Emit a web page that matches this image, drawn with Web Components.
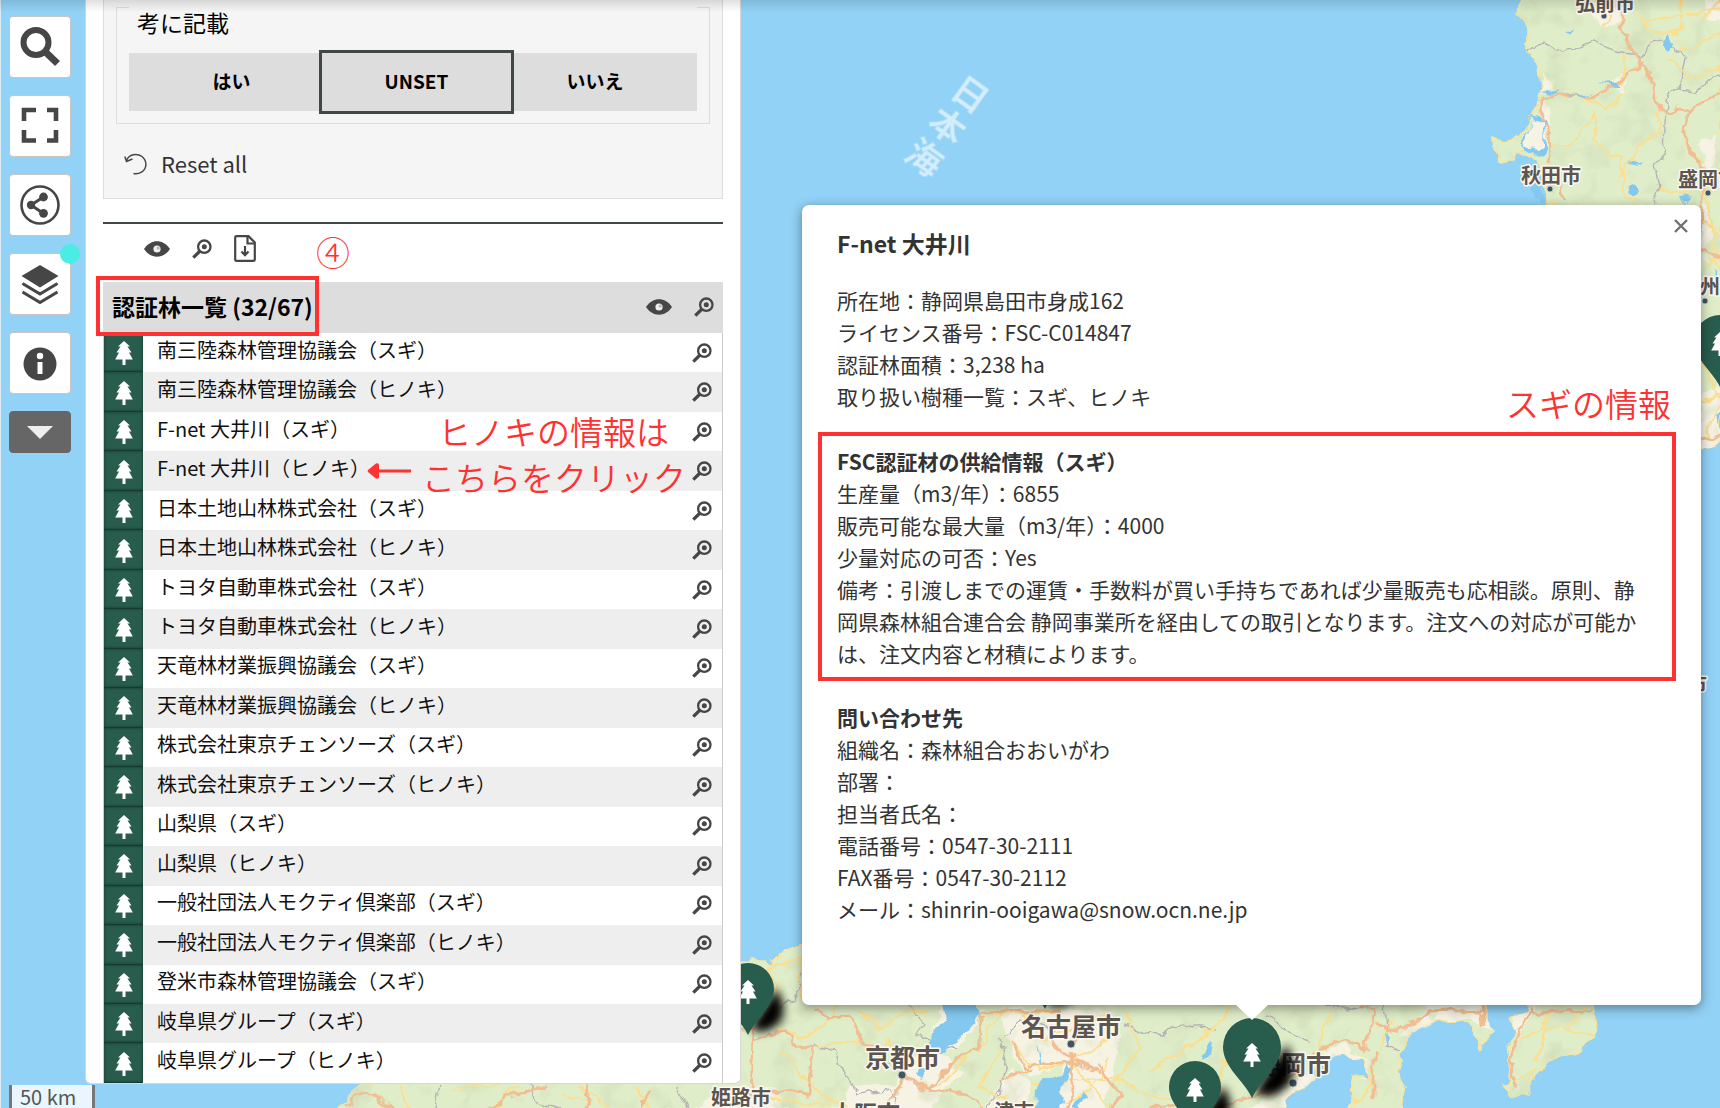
<!DOCTYPE html>
<html lang="ja">
<head>
<meta charset="utf-8">
<meta name="viewport" content="width=device-width, initial-scale=1">
<title>認証林マップ</title>
<style>
html, body { height: 100%; margin: 0; }
body { overflow: hidden; font-family: "Noto Sans CJK JP", "Noto Sans", sans-serif; color: #000; background: #92d2f6; }
</style>
</head>
<body>
<forest-app></forest-app>

<script>
const ICONS = {
  search: ['0 0 40 40', '<circle cx="16" cy="15.500" r="12.500" fill="none" stroke="#464646" stroke-width="6"/><path d="M25.500 25 37.500 36.500" stroke="#464646" stroke-width="7"/>'],
  full: ['0 0 40 40', '<path d="M4 15V4H16M27 4H36V15M36 24V34.500H27M16 34.500H4V24" fill="none" stroke="#464646" stroke-width="4.600"/>'],
  share: ['0 0 40 40', '<circle cx="20" cy="20" r="18.500" fill="none" stroke="#464646" stroke-width="2.600"/><path d="M23.500 12 11 20 23.500 28.500" fill="none" stroke="#464646" stroke-width="3"/><circle cx="23.500" cy="12" r="4.400" fill="#464646"/><circle cx="11" cy="20" r="4.200" fill="#464646"/><circle cx="23.500" cy="28.300" r="4.400" fill="#464646"/>'],
  layers: ['0 0 40 40', '<path d="M20 1 38.500 12 20 23.500 1.500 12Z" fill="#464646"/><path d="M2.500 19.500 20 30 37.500 19.500M2.500 28 20 38.500 37.500 28" fill="none" stroke="#464646" stroke-width="3.200"/>'],
  info: ['0 0 40 40', '<circle cx="20" cy="21" r="16.500" fill="#464646"/><circle cx="20" cy="13" r="3.200" fill="#fff"/><path d="M17.500 19H22.500V31H17.500Z" fill="#fff"/>'],
  down: ['0 0 40 20', '<path d="M7 4H33L20 17Z" fill="#eee"/>'],
  eye: ['0 0 26 16', '<path d="M0 8C7-2.300 19-2.300 26 8 19 18.300 7 18.300 0 8Z" fill="#464646"/><circle cx="13" cy="8" r="3.600" fill="#eee"/><circle cx="14.200" cy="7" r="1.500" fill="#464646" opacity=".35"/>'],
  zoom: ['0 0 20 20', '<circle cx="12.300" cy="7.700" r="6.200" fill="none" stroke="#464646" stroke-width="2.300"/><circle cx="12.300" cy="7.700" r="2.500" fill="#464646"/><path d="M8 12 1.300 18.700" stroke="#464646" stroke-width="3.200"/>'],
  file: ['0 0 22 27', '<path d="M1.200 2.500Q1.200 1.200 2.500 1.200H14.500L20.800 7.500V24.500Q20.800 25.800 19.500 25.800H2.500Q1.200 25.800 1.200 24.500Z" fill="none" stroke="#464646" stroke-width="2.200"/><path d="M13.500 1.500V8.500H20.500M11 11V20M7.500 16.500 11 20.200 14.500 16.500" fill="none" stroke="#464646" stroke-width="2.200"/>'],
  reset: ['0 0 24 22', '<path d="M2.500 7.500C5 1 13 0 18 3.500 23.500 8 23 16 17.500 19.200Q13.500 21.500 9.500 20.500M0.800 3.500 2.500 8.500 8.500 6" fill="none" stroke="#464646" stroke-width="1.500"/>'],
  tree: ['0 0 18 24', '<path d="M9 0 15 5.500H12.500L16.500 11.500H14L17.800 18.500H10.500V24H7.500V18.500H.2L4 11.500H1.500L5.500 5.500H3Z" fill="#fff"/>'],
  close: ['0 0 14 14', '<path d="M1 1 13 13M13 1 1 13" stroke="#707070" stroke-width="2.400"/>'],
  arrow: ['0 0 44 16', '<path d="M10 8H44" stroke="#ff3131" stroke-width="3"/><path d="M1 7Q0 8 1 9L9 15.500Q12 16.500 12 13.500V2.500Q12-.5 9 .5Z" fill="#ff3131"/>']
};

function define(name, html, setup) {
  const tpl = document.createElement('template');
  tpl.innerHTML = html;
  customElements.define(name, class extends HTMLElement {
    constructor() {
      super();
      this.attachShadow({ mode: 'open' }).append(tpl.content.cloneNode(true));
    }
    connectedCallback() { if (setup) setup.call(this, this.shadowRoot); }
  });
}

define('ui-icon', `<style>:host{display:inline-flex}svg{display:block;width:var(--w,20px);height:var(--h,20px);overflow:visible}</style><svg aria-hidden="true"></svg>`,
  function (root) {
    const [box, shapes] = ICONS[this.getAttribute('name')];
    const svg = root.querySelector('svg');
    svg.setAttribute('viewBox', box);
    svg.innerHTML = shapes;
  });

define('tool-button', `<style>
:host{display:block;position:relative;--w:40px;--h:40px}
button{display:flex;align-items:center;justify-content:center;width:62px;height:62px;padding:0;border:1px solid #c9c5c2;border-radius:4px;background:#fff;cursor:pointer}
:host([dark]) button{height:42px;background:#666;border-color:#666;--h:20px}
:host([badge])::after{content:"";position:absolute;right:-9px;top:-9px;width:20px;height:20px;border-radius:50%;background:#4bece3}
</style><button type="button"><slot></slot></button>`,
  function (root) { root.querySelector('button').setAttribute('aria-label', this.getAttribute('label')); });

define('tool-bar', `<style>
:host{display:flex;flex-direction:column;align-items:flex-start;gap:17px;padding:16px 0 0 9px}
</style>
<tool-button label="検索"><ui-icon name="search"></ui-icon></tool-button>
<tool-button label="全画面"><ui-icon name="full"></ui-icon></tool-button>
<tool-button label="共有"><ui-icon name="share"></ui-icon></tool-button>
<tool-button label="レイヤー" badge><ui-icon name="layers"></ui-icon></tool-button>
<tool-button label="情報"><ui-icon name="info"></ui-icon></tool-button>
<tool-button label="閉じる" dark><ui-icon name="down"></ui-icon></tool-button>`);

define('filter-box', `<style>
:host{display:block;margin-top:-40px;padding:16px 12px 14px;border:1px solid #ddd;background:#f5f5f5}
fieldset{margin:0;padding:0 12px 12px;border:1px solid #ddd;min-width:0}
legend{box-sizing:border-box;width:100%;padding:30px 8px 0;font-size:23px;line-height:30px}
.opts{display:grid;grid-template-columns:193fr 189fr 186fr;margin-top:16px}
label{display:flex;align-items:center;justify-content:center;height:58px;background:#ddd;font-size:19px;font-weight:700;padding-bottom:4px;box-sizing:border-box;cursor:pointer}
label:first-child{padding-left:12px}
label:last-child{padding-right:18px}
input{position:absolute;opacity:0;pointer-events:none}
label:has(:checked){outline:3px solid #404845;z-index:1}
.reset{display:flex;align-items:center;gap:13px;height:40px;margin-top:20px;padding:0 8px;border:0;background:none;font:inherit;font-size:22px;line-height:32px;color:#333;--w:24px;--h:22px;cursor:pointer}
.reset span{padding-bottom:2px}
</style>
<fieldset><legend>考に記載</legend>
<div class="opts">
<label><input type="radio" name="note">はい</label>
<label><input type="radio" name="note" checked>UNSET</label>
<label><input type="radio" name="note">いいえ</label>
</div></fieldset>
<button class="reset" type="button"><ui-icon name="reset"></ui-icon><span>Reset all</span></button>`);

define('forest-row', `<style>
:host{flex:1 1 0;min-height:0;display:flex;align-items:center;background:var(--row,#fff);border:solid #ccc;border-width:0 1px}
.mark{box-sizing:border-box;align-self:stretch;width:39px;padding-top:2px;display:flex;align-items:center;justify-content:center;background:#285c4c;box-shadow:inset 0 0 3px #143a2e;border-bottom:1px solid #163a2f;--w:18px;--h:24px}
a{flex:1;padding:0 0 6px 14px;font-size:20px;line-height:30px;color:#111;text-decoration:none;white-space:nowrap}
button{display:flex;padding:0;margin-right:10px;border:0;background:none;cursor:pointer}
</style><span class="mark"><ui-icon name="tree"></ui-icon></span><a href="#"><slot></slot></a><button type="button" aria-label="拡大"><ui-icon name="zoom"></ui-icon></button>`);

define('forest-list', `<style>
:host{flex:1;min-height:0;display:flex;flex-direction:column}
.tools{display:flex;align-items:center;gap:22px;height:58px;padding:0 0 9px 41px;box-sizing:border-box}
.tools button,header button{display:flex;padding:0;border:0;background:none;cursor:pointer}
.eye{--w:26px;--h:16px}.file{--w:22px;--h:27px}
.num{margin-left:38px;font-size:34px;line-height:40px;font-weight:300;color:#ff3131;padding-top:6px}
header{position:relative;display:flex;align-items:center;height:51px;padding:0 9px 2px;background:#ddd;box-sizing:border-box}
h2{flex:1;margin:0;font-size:23px;line-height:34px;padding-bottom:2px}
.eye2{margin-right:22px}
.frame{position:absolute;left:-7px;top:-6px;width:223px;height:60px;box-sizing:border-box;border:4px solid #ff3131}
.rows{flex:1;min-height:0;display:flex;flex-direction:column}
forest-row:nth-child(even){--row:#eee}
</style>
<div class="tools">
<button class="eye" type="button" aria-label="表示"><ui-icon name="eye"></ui-icon></button>
<button type="button" aria-label="拡大"><ui-icon name="zoom"></ui-icon></button>
<button class="file" type="button" aria-label="ダウンロード"><ui-icon name="file"></ui-icon></button>
<span class="num">④</span>
</div>
<header><h2>認証林一覧 (32/67)</h2>
<button class="eye eye2" type="button" aria-label="表示"><ui-icon name="eye"></ui-icon></button>
<button type="button" aria-label="拡大"><ui-icon name="zoom"></ui-icon></button>
<div class="frame"></div></header>
<div class="rows">
<forest-row>南三陸森林管理協議会（スギ）</forest-row>
<forest-row>南三陸森林管理協議会（ヒノキ）</forest-row>
<forest-row>F-net 大井川（スギ）</forest-row>
<forest-row>F-net 大井川（ヒノキ）</forest-row>
<forest-row>日本土地山林株式会社（スギ）</forest-row>
<forest-row>日本土地山林株式会社（ヒノキ）</forest-row>
<forest-row>トヨタ自動車株式会社（スギ）</forest-row>
<forest-row>トヨタ自動車株式会社（ヒノキ）</forest-row>
<forest-row>天竜林材業振興協議会（スギ）</forest-row>
<forest-row>天竜林材業振興協議会（ヒノキ）</forest-row>
<forest-row>株式会社東京チェンソーズ（スギ）</forest-row>
<forest-row>株式会社東京チェンソーズ（ヒノキ）</forest-row>
<forest-row>山梨県（スギ）</forest-row>
<forest-row>山梨県（ヒノキ）</forest-row>
<forest-row>一般社団法人モクティ倶楽部（スギ）</forest-row>
<forest-row>一般社団法人モクティ倶楽部（ヒノキ）</forest-row>
<forest-row>登米市森林管理協議会（スギ）</forest-row>
<forest-row>岐阜県グループ（スギ）</forest-row>
<forest-row>岐阜県グループ（ヒノキ）</forest-row>
</div>`);

define('side-panel', `<style>
:host{position:relative;display:flex;flex-direction:column;box-sizing:border-box;height:calc(100vh - 24px);padding:0 17px;background:#fff;border:1px solid #d8d8d8;border-top:0;border-radius:0 0 6px 6px;overflow:hidden}
hr{width:100%;height:2px;margin:23px 0 0;border:0;background:#404845}
.note{position:absolute;color:#ff3131;font-size:33px;line-height:46px;font-weight:350;white-space:nowrap;--w:44px;--h:16px}
.n1{left:352px;top:408px}.n2{left:336px;top:454px}.ar{left:281px;top:463px;line-height:0}
</style>
<filter-box></filter-box><hr><forest-list></forest-list>
<div class="note n1">ヒノキの情報は</div><div class="note n2">こちらをクリック</div><div class="note ar"><ui-icon name="arrow"></ui-icon></div>`);

define('info-popup', `<style>
:host{position:relative;display:block;box-sizing:border-box;margin:205px 19px 0 61px;height:800px;padding:22px 25px 0 16px;background:#fff;border-radius:7px;box-shadow:0 3px 12px rgba(0,0,0,.42);color:#333;font-size:21px;line-height:32px}
:host::after{content:"";position:absolute;left:434px;top:100%;border:solid transparent;border-width:15px 16px 0;border-top-color:#fff}
h1{margin:0 19px 25px;font-size:23px;line-height:32px}
h2{margin:0;font-size:21px;line-height:32px}
p{margin:0}
section{padding:0 24px 0 19px}
.boxed{margin:20px 0 20px;padding:9px 20px 8px 15px;border:4px solid #ff3131}
.close{position:absolute;right:13px;top:14px;display:flex;padding:0;border:0;background:none;cursor:pointer;--w:14px;--h:14px}
.note{position:absolute;right:30px;top:175px;color:#ff3131;font-size:33px;line-height:46px;font-weight:350}
a{color:inherit;text-decoration:none}
</style>
<button class="close" type="button" aria-label="閉じる"><ui-icon name="close"></ui-icon></button>
<h1>F-net 大井川</h1>
<section><p>所在地：静岡県島田市身成162</p><p>ライセンス番号：FSC-C014847</p><p>認証林面積：3,238 ha</p><p>取り扱い樹種一覧：スギ、ヒノキ</p></section>
<section class="boxed"><h2>FSC認証材の供給情報（スギ）</h2><p>生産量（m3/年）：6855</p><p>販売可能な最大量（m3/年）：4000</p><p>少量対応の可否：Yes</p><p>備考：引渡しまでの運賃・手数料が買い手持ちであれば少量販売も応相談。原則、静岡県森林組合連合会 静岡事業所を経由しての取引となります。注文への対応が可能かは、注文内容と材積によります。</p></section>
<section><h2>問い合わせ先</h2><p>組織名：森林組合おおいがわ</p><p>部署：</p><p>担当者氏名：</p><p>電話番号：0547-30-2111</p><p>FAX番号：0547-30-2112</p><p>メール：<a href="mailto:shinrin-ooigawa@snow.ocn.ne.jp">shinrin-ooigawa@snow.ocn.ne.jp</a></p></section>
<div class="note">スギの情報</div>`);

define('map-canvas', `<style>
:host{position:absolute;inset:0;overflow:hidden}
svg{display:block;width:100%;height:100%}
.lbl text{font-weight:700;fill:#5c5550;stroke:#fbf8f0;stroke-width:3;paint-order:stroke;stroke-linejoin:round}
.y{stroke:#fbdf8f;stroke-width:2.200}.o{stroke:#f1bd91;stroke-width:2.800}.g{stroke:#b5b3b5;stroke-width:1.400}
</style>
<svg viewBox="0 0 1720 1108" preserveAspectRatio="xMinYMin slice">
<defs>
<filter id="rough" x="0" y="0" width="1720" height="1108" filterUnits="userSpaceOnUse"><feTurbulence type="fractalNoise" baseFrequency=".06" numOctaves="3" seed="4"/><feDisplacementMap in="SourceGraphic" scale="13" xChannelSelector="R" yChannelSelector="G"/></filter>
<filter id="hill" x="0" y="0" width="1720" height="1108" filterUnits="userSpaceOnUse"><feTurbulence type="fractalNoise" baseFrequency=".035" numOctaves="3" seed="9"/><feColorMatrix values="0 0 0 0 .62  0 0 0 0 .70  0 0 0 0 .47  2.6 0 0 0 -1.35"/></filter>
<filter id="sh" x="-100%" y="-100%" width="300%" height="300%"><feGaussianBlur stdDeviation="5"/></filter>
<path id="land" d="M1528-10 1516 14 1527 22V50L1538 65 1540 92 1533 115 1520 135 1508 143 1492 138V144L1498 160H1512L1516 155H1530L1540 162 1545 175V300H1690V450L1708 450 1722 440V-10ZM335 1112 355 1090 368 1080 400 1060 700 960H765L772 966 782 953 802 943 830 930H1482L1485 1020 1495 1030 1485 1042 1480 1050 1475 1035 1465 1021H1440L1425 1025 1410 1033 1408 1045 1400 1055V1070L1405 1090 1401 1112H1350L1352 1090 1354 1075H1371L1360 1060 1345 1053 1330 1055 1310 1072 1312 1080 1290 1095 1283 1112ZM1522 990 1525 1010 1510 1020 1518 1030 1508 1045 1513 1072 1510 1085 1502 1084 1510 1095H1528L1531 1080 1550 1060 1572 1056 1592 1040 1595 1025 1590 990Z"/>
<clipPath id="c"><use href="#land"/></clipPath>
<path id="firs" d="M9 0 15 5.500H12.500L16.500 11.500H14L17.800 18.500H10.500V24H7.500V18.500H.2L4 11.500H1.500L5.500 5.500H3Z" fill="#fff"/>
<g id="pin"><path d="M8 44 24 20 34 6Q40 26 33 36 22 48 8 44Z" fill="#000" stroke="#000" stroke-width="8" filter="url(#sh)"/><path d="M0 51C-7 35-29 20-29 0A29 29 0 0 1 29 0C29 20 7 35 0 51Z" fill="#285c4c"/><use href="#firs" x="-9" y="-4"/></g>
<g id="pin2"><path d="M7 38 20 18 28 6Q36 22 28 32 18 42 7 38Z" fill="#000" stroke="#000" stroke-width="7" filter="url(#sh)"/><path d="M0 46C-6 32-26 18-26 0A26 26 0 0 1 26 0C26 18 6 32 0 46Z" fill="#285c4c"/><use href="#firs" x="-9" y="-9"/></g>
</defs>
<rect width="1720" height="1108" fill="#92d2f6"/>
<rect width="1" height="1108" fill="#dcebf4"/>
<g filter="url(#rough)">
<use href="#land" fill="#dfedc8" stroke="#f8e6a2" stroke-width="1.600"/>
<g clip-path="url(#c)" fill="none">
<g fill="#f7f3e4"><path d="M1590 0H1625L1618 25 1598 26ZM1704 0H1722V22L1706 20ZM1541 72 1558 92 1541 96ZM1540 100 1550 110 1546 155 1538 130ZM1612 80 1626 76 1624 98ZM1700 138 1716 135 1714 160 1703 168ZM1702 205 1712 215 1708 262 1702 262ZM1701 395 1722 380V450H1701ZM946 1006 930 1035 952 1050 975 1028 985 1006ZM905 1058 940 1050 960 1075 925 1112H840L850 1085 895 1085ZM1000 1006 1110 1010 1120 1040 1105 1112H1062L1060 1065 1030 1078 1010 1050ZM985 1108 1010 1070 1030 1082 1030 1112ZM730 1085 780 1090 785 1112H690ZM1275 1095 1320 1065 1320 1080 1285 1112H1240ZM1400 1035 1410 1035 1440 1015 1425 1012ZM1422 1002 1480 1002 1494 1030 1470 1020 1430 1020ZM1320 1050 1345 1045 1370 1065 1365 1080 1345 1056ZM1510 1010 1535 1002 1520 1040Z"/></g>
<rect width="1720" height="1108" filter="url(#hill)" opacity=".8"/>
<g class="g"><path d="M1527 50 1545 44 1560 50 1578 49 1595 41 1615 52 1640 55 1660 38 1685 55 1680 88 1666 100 1664 155 1655 165 1660 190 1655 206M1678 88 1698 90 1722 70M775 1010 795 1000 805 965M812 1042 835 1050 845 1075 860 1095 890 1090 902 1112M905 1000 925 1025 915 1035 955 1048M1000 1040 1005 1065 1000 1090 985 1112M1005 1035 1020 1020 1060 1030M1125 1025 1160 1035 1180 1025 1215 1030M1265 1015 1290 1035 1310 1045M1385 1000 1388 1048 1400 1052M1325 1005 1345 1010 1385 1002M440 1085 435 1112M530 1083 535 1100 560 1112M675 1085 690 1112"/></g>
<g class="y"><path d="M1637 10 1650 30 1680 35 1682 0M1640 22 1720 10M1680 50 1722 32M1625 95 1605 110 1592 100 1570 92M1553 148 1572 142 1592 112 1596 140 1612 158 1622 160 1622 195 1640 200M1655 110 1660 130 1640 145 1635 160 1618 175M1660 190 1690 195M1685 140 1700 160 1710 215 1720 280M1668 60 1690 80 1722 65M1600 26 1620 5M1720 0 1705 20M1547 205 1560 200M1625 55 1622 85M1702 220 1720 235M1702 270 1720 255M1701 360 1720 400 1705 440M1701 400 1722 395M1516 155 1540 145"/>
<path d="M770 970 780 1000 772 1020 800 1040 830 1020 842 1000M745 975 800 960 802 1000M780 1050 820 1095 850 1108M860 1010 880 1030 900 1015 930 1010M815 1045 860 1040M905 1075 890 1040 870 1070M940 1085 985 1040 1005 1005M1000 1050 980 1085 1020 1108M1010 1040 1040 1070 1075 1060 1110 1040M1020 1010 1045 1040 1110 1012M1070 1060 1110 1108M1110 1060 1090 1090 1060 1108M1125 1010 1140 1050 1115 1080 1170 1100M1150 1075 1210 1030 1230 1008M1215 1108 1225 1060M1030 1085 1120 1075M985 1015 1060 1010M730 1095 830 1105M1330 1010 1320 1050M1345 1105 1370 1092 1375 1060M1390 1018 1380 1050M1440 1010 1480 1012M1520 1042 1545 1025 1575 1030 1592 1038M1545 1025 1555 1002M1536 1060 1545 1040 1545 1010M1515 1080 1535 1070M1570 1028 1585 1005M400 1086 410 1108M450 1090 500 1085M495 1108 520 1085M580 1085 610 1108M640 1085 650 1110M560 1095 590 1100"/></g>
<g class="o"><path d="M1625 12 1620 28 1630 40 1632 50 1645 65 1655 90 1658 108 1668 112 1680 108 1692 112 1704 102 1722 92M1645 60 1628 75 1612 88 1590 96 1560 95 1540 100 1538 112 1548 125 1550 150 1547 165M1692 112 1682 130 1692 148 1702 170 1703 200 1700 230M1562 185 1565 200M1701 440 1722 436M1700 250 1720 258"/>
<path d="M728 1030 754 1030 752 1095 725 1090M752 1040 785 1030 795 1048 812 1045 808 1095 755 1092M815 1010 830 1018 850 1015 865 1045 890 1065 905 1075 895 1095 880 1112M905 1078 930 1090 955 1060 978 1050 982 1012 1060 1008M930 1090 970 1095 985 1112M1060 1008 1050 1040 1072 1060 1070 1112M1030 1065 1072 1062 1100 1070M1085 1015 1072 1045M1100 1065 1120 1095 1110 1112M1145 1112 1190 1104 1230 1105 1280 1085 1325 1045 1345 1040 1365 1050 1375 1010 1360 1004M1375 1025 1400 1030 1430 1012 1482 1010M1375 1050 1375 1100M1530 1005 1520 1035 1512 1045 1515 1090M1525 1012 1592 1010M1482 1005 1484 1025M345 1105 365 1092 375 1096 400 1112M480 1112 510 1098 545 1085M590 1085 585 1112M640 1112 650 1090M1010 1040 1030 1070 1000 1080"/></g>
</g>
<g fill="#83c9ef"><path d="M942 1000 946 1022 930 1035 925 1045 938 1053H946L948 1045 975 1025 982 1010 975 1000ZM918 1068 926 1070 922 1082 916 1076ZM1034 1112 1035 1090 1045 1078 1062 1072 1066 1064 1071 1068 1062 1090 1066 1102 1062 1112ZM1080 1095 1084 1098 1078 1112 1074 1108ZM1662 38 1668 35 1676 44 1668 52 1661 45ZM1565 32 1575 28 1572 35ZM1529 183 1538 183 1544 205 1539 205ZM1635 182 1641 188 1636 195 1629 190ZM1630 164 1640 158 1637 165ZM1680 197 1691 195 1684 202ZM1540 93 1565 90 1553 95ZM1568 95 1592 92 1580 97ZM1597 83 1615 82 1622 88ZM1037 1040 1041 1060 1040 1067ZM1208 1040 1212 1050 1205 1060ZM1384 1030 1390 1038 1386 1044ZM1713 270 1717 282 1711 292ZM1716 415 1722 410V425Z"/><path d="M1532 115 1545 120 1546 150 1540 158 1525 148 1522 143Z"/></g>
<path d="M1531 117 1543 121 1545 140 1537 150 1524 145Z" fill="#f7f3e4"/>
</g>
<g fill="#40555f" stroke="#d9dcd4" stroke-width=".8"><circle cx="1604" cy="16" r="3"/><circle cx="1550" cy="189" r="3"/><circle cx="1708" cy="193" r="3"/><circle cx="1705" cy="301" r="3"/><circle cx="1071" cy="1044" r="4"/><circle cx="902" cy="1075" r="4"/><circle cx="1293" cy="1083" r="4"/></g>
<g class="lbl" font-size="20"><text x="1575" y="11">弘前市</text><text x="1521" y="183">秋田市</text><text x="1678" y="187">盛岡市</text><text x="1680" y="294">奥州市</text><text x="1687" y="692">市</text><text x="711" y="1105">姫路市</text><text x="994" y="1119">津市</text></g>
<g class="lbl" font-size="25"><text x="1021" y="1036">名古屋市</text><text x="865" y="1067">京都市</text><text x="831" y="1122" font-size="23">大阪市</text><text x="1256" y="1074">静岡市</text></g>
<g transform="translate(970 94) rotate(36)" font-size="35" font-weight="500" fill="#d3edfc" stroke="#a9dbf7" stroke-width="2" paint-order="stroke"><text x="-17 -17 -17" y="13 52 91">日本海</text></g>
<use href="#pin2" x="748" y="989"/><use href="#pin2" x="1720" y="341"/><use href="#pin2" x="1045" y="963"/><use href="#pin2" x="1195" y="1087"/><use href="#pin" x="1252" y="1047"/>
</svg>`);

define('map-scale', `<style>
:host{position:absolute;left:9px;bottom:0;width:86px;height:23px;box-sizing:border-box;border:solid #777;border-width:0 3px;background:rgba(255,255,255,.8);padding-left:8px;color:#555;font-size:20px;line-height:23px}
</style><slot></slot>`);

define('forest-app', `<style>
:host{position:relative;display:grid;grid-template-columns:85px minmax(480px,656px) minmax(0,1fr);align-items:start;height:100vh;overflow:hidden}
tool-bar,info-popup{position:relative}
tool-bar{z-index:1}
.shade{position:absolute;left:0;right:0;top:0;height:12px;background:linear-gradient(rgba(0,0,0,.12),transparent);pointer-events:none}
</style>
<map-canvas></map-canvas>
<tool-bar></tool-bar>
<side-panel></side-panel>
<info-popup></info-popup>
<map-scale>50 km</map-scale>
<div class="shade"></div>`);
</script>
</body>
</html>
